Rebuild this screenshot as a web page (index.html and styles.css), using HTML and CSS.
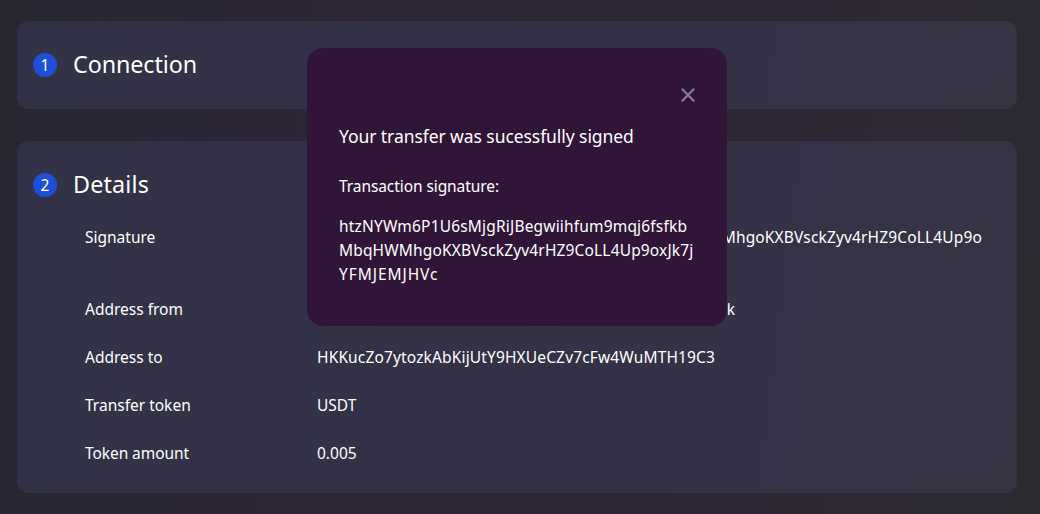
FILE: index.html
```
<!DOCTYPE html>
<html lang="en">
<head>
<meta charset="utf-8">
<title>Transfer</title>
<link rel="stylesheet" href="styles.css">
</head>
<body>
<main class="steps">
  <section class="card">
    <header class="card-head"><span class="num">1</span><h2 class="title">Connection</h2></header>
  </section>
  <section class="card card-details">
    <header class="card-head"><span class="num">2</span><h2 class="title title-details">Details</h2></header>
    <dl class="rows">
      <dt>Signature</dt><dd class="hash signature">MhgoKXBVsckZyv4rHZ9CoLL4Up9o</dd>
      <dt>Address from</dt><dd class="from">k</dd>
      <dt>Address to</dt><dd class="hash">HKKucZo7ytozkAbKijUtY9HXUeCZv7cFw4WuMTH19C3</dd>
      <dt>Transfer token</dt><dd>USDT</dd>
      <dt class="amount">Token amount</dt><dd>0.005</dd>
    </dl>
  </section>
</main>
<div class="modal" role="dialog">
  <div class="modal-top">
    <svg class="close" viewBox="0 0 16 16" width="16" height="16"><path d="M1.8 1.8 14.2 14.2M14.2 1.8 1.8 14.2" fill="none" stroke="currentColor" stroke-width="2"/></svg>
  </div>
  <p class="lead">Your transfer was sucessfully signed</p>
  <p class="label">Transaction signature:</p>
  <p class="sig"><span class="sig-a">htzNYWm6P1U6sMjgRiJBegwiihfum9mqj6fsfkb</span><span class="sig-b">MbqHWMhgoKXBVsckZyv4rHZ9CoLL4Up9oxJk7j</span><span class="sig-c">YFMJEMJHVc</span></p>
</div>
</body>
</html>
```
FILE: styles.css
```
* { box-sizing: border-box; }
body {
  margin: 0;
  height: 514px;
  overflow: hidden;
  color: #fff;
  font: 15.5px/24px "Noto Sans", sans-serif;
  background: linear-gradient(97deg, #292632 0%, #2b2536 28%, #2e2635 58%, #2e2835 80%, #2c2a31 100%);
}
h2, p, dl, dd { margin: 0; }
.steps {
  display: flex;
  flex-direction: column;
  gap: 32px;
  width: 1017px;
  padding: 21px 0 0 17px;
}
.card {
  height: 88px;
  padding: 28px 16px;
  border-radius: 12px;
  background: linear-gradient(97deg, #323246 0%, #343147 45%, #353247 75%, #353443 100%);
}
.card-details { height: 352px; }
.card-head { display: flex; align-items: center; gap: 16px; height: 32px; }
.num {
  width: 24px;
  height: 24px;
  border-radius: 50%;
  background: #1d4fd8;
  text-align: center;
}
.title { padding-bottom: 2px; font-size: 23.3px; line-height: 30px; font-weight: 400; letter-spacing: -0.08px; }
.title-details { letter-spacing: 0.17px; }
.rows {
  display: grid;
  grid-template-columns: 232px 1fr;
  row-gap: 24px;
  padding: 24px 0 0 52px;
}
.amount { letter-spacing: -0.07px; }
.hash { letter-spacing: 0.148px; white-space: nowrap; }
.signature { width: 665px; height: 48px; text-align: right; }
.from { width: 418px; text-align: right; }
.modal {
  position: absolute;
  top: 48px;
  left: 307px;
  width: 420px;
  height: 278px;
  padding: 39px 32px 0;
  border-radius: 16px;
  background: #311538;
}
.modal-top { display: flex; justify-content: flex-end; height: 37px; margin-right: -1px; }
.close { display: block; color: #8080aa; }
.lead { font-size: 17.5px; letter-spacing: -0.07px; }
.label { margin-top: 26px; letter-spacing: -0.08px; }
.sig { margin-top: 16px; white-space: nowrap; }
.sig span { display: block; }
.sig-a { letter-spacing: 0.18px; }
.sig-b { letter-spacing: 0.16px; }
.sig-c { letter-spacing: 0.95px; }
```
